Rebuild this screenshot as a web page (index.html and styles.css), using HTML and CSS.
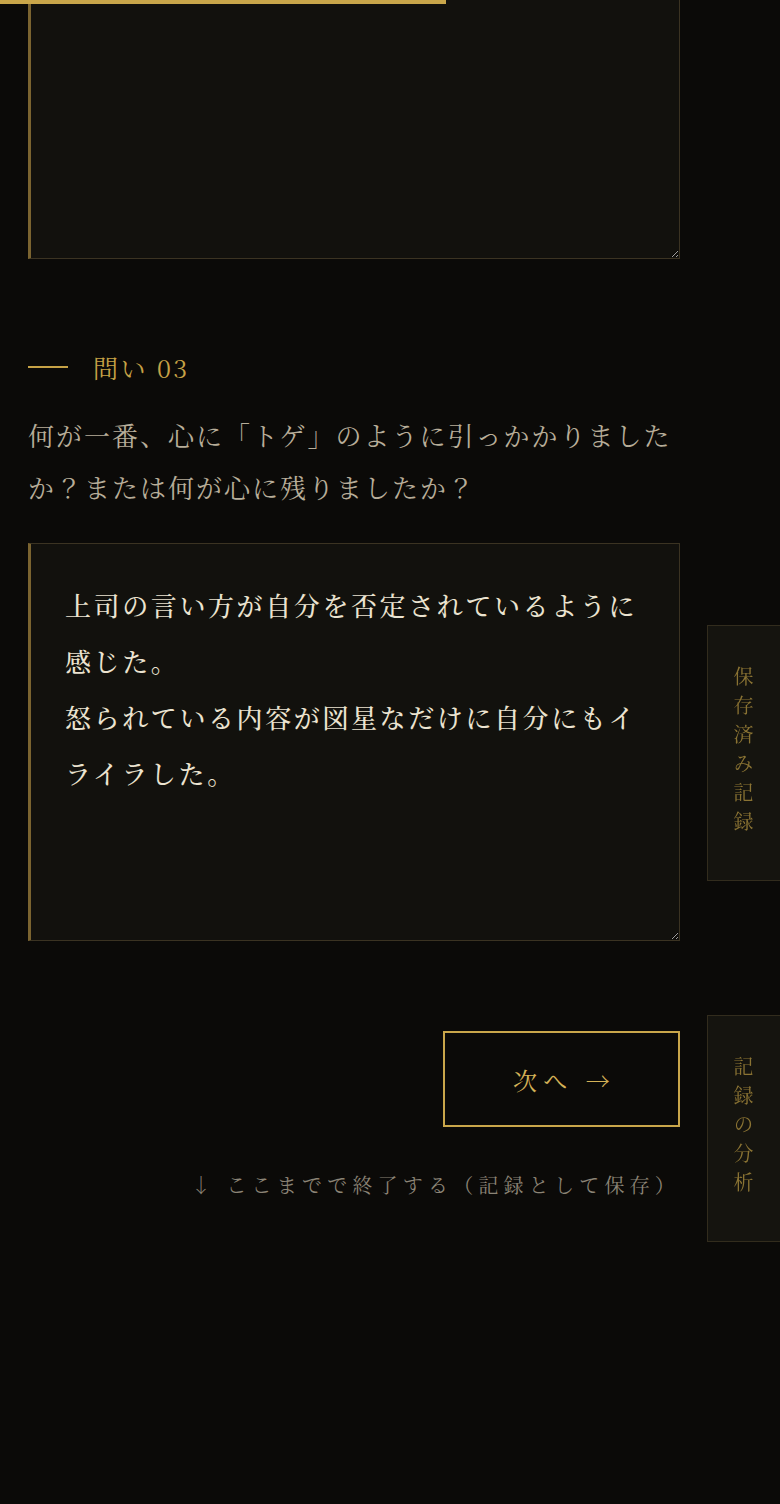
FILE: index.html
```html
<!DOCTYPE html>
<html lang="ja">
<head>
<meta charset="utf-8">
<title>問い 03</title>
<link rel="stylesheet" href="styles.css">
</head>
<body>
<div class="progress"></div>
<main class="page">
  <textarea class="answer answer-prev" aria-label="問い 02 の回答"></textarea>
  <section class="question">
    <div class="q-label"><span class="q-line"></span><span class="q-num">問い 03</span></div>
    <p class="q-text">何が一番、心に「トゲ」のように引っかかりましたか？または何が心に残りましたか？</p>
    <textarea class="answer answer-current" aria-label="問い 03 の回答">上司の言い方が自分を否定されているように感じた。
怒られている内容が図星なだけに自分にもイライラした。</textarea>
  </section>
  <div class="actions">
    <button class="next" type="button">次へ →</button>
    <a class="finish" href="#">↓ ここまでで終了する（記録として保存）</a>
  </div>
</main>
<nav class="side-tabs">
  <a class="tab" href="#">保存済み記録</a>
  <a class="tab" href="#">記録の分析</a>
</nav>
</body>
</html>
```

FILE: styles.css
```css
html, body {
  margin: 0;
  padding: 0;
}
body {
  background: #0b0a08;
  font-family: "Noto Serif CJK JP", "Liberation Serif", "Noto Sans CJK JP", serif;
  color: #b7ad99;
  min-height: 1504px;
}
.progress {
  position: fixed;
  top: 0;
  left: 0;
  width: 446px;
  height: 4px;
  background: #c9a64a;
  z-index: 5;
}
.page {
  width: 652px;
  margin-left: 28px;
  display: flex;
  flex-direction: column;
}
.answer {
  display: block;
  box-sizing: border-box;
  width: 652px;
  margin: 0;
  background: #12110d;
  border: 1px solid #3b3322;
  border-left: 3px solid #7b6430;
  border-radius: 0;
  color: #ebe3d0;
  font-family: inherit;
  font-size: 26px;
  font-weight: 500;
  letter-spacing: 0.1em;
  line-height: 56px;
  padding: 33px 34px;
  outline: none;
  resize: vertical;
}
.answer-prev {
  margin-top: -10px;
  height: 269px;
}
.question {
  display: flex;
  flex-direction: column;
  margin-top: 90px;
}
.q-label {
  display: flex;
  align-items: center;
  gap: 25px;
  height: 36px;
  color: #c6a246;
  font-size: 25px;
  letter-spacing: 0.1em;
}
.q-line {
  display: block;
  width: 40px;
  height: 2px;
  background: #c6a246;
}
.q-text {
  margin: 24px 0 0;
  font-size: 26px;
  letter-spacing: 2px;
  line-height: 52px;
  color: #b7ad99;
}
.answer-current {
  margin-top: 30px;
  height: 398px;
}
.actions {
  display: flex;
  flex-direction: column;
  align-items: flex-end;
  margin-top: 90px;
}
.next {
  width: 237px;
  height: 96px;
  background: transparent;
  border: 2px solid #c9a64a;
  color: #d4b257;
  font-family: inherit;
  font-size: 24px;
  letter-spacing: 0.26em;
  padding-left: 12px;
  cursor: pointer;
}
.finish {
  margin-top: 43px;
  margin-right: 0;
  color: #8b8476;
  text-decoration: none;
  font-size: 20px;
  letter-spacing: 0.26em;
  line-height: 30px;
}
.side-tabs {
  position: fixed;
  top: 625px;
  right: -2px;
  display: flex;
  flex-direction: column;
  gap: 134px;
}
.tab {
  box-sizing: border-box;
  width: 75px;
  padding: 40px 0;
  display: flex;
  justify-content: center;
  background: #15140f;
  border: 1px solid #322c1d;
  writing-mode: vertical-rl;
  color: #8a7333;
  text-decoration: none;
  font-size: 20px;
  letter-spacing: 9px;
  line-height: 75px;
}
```
